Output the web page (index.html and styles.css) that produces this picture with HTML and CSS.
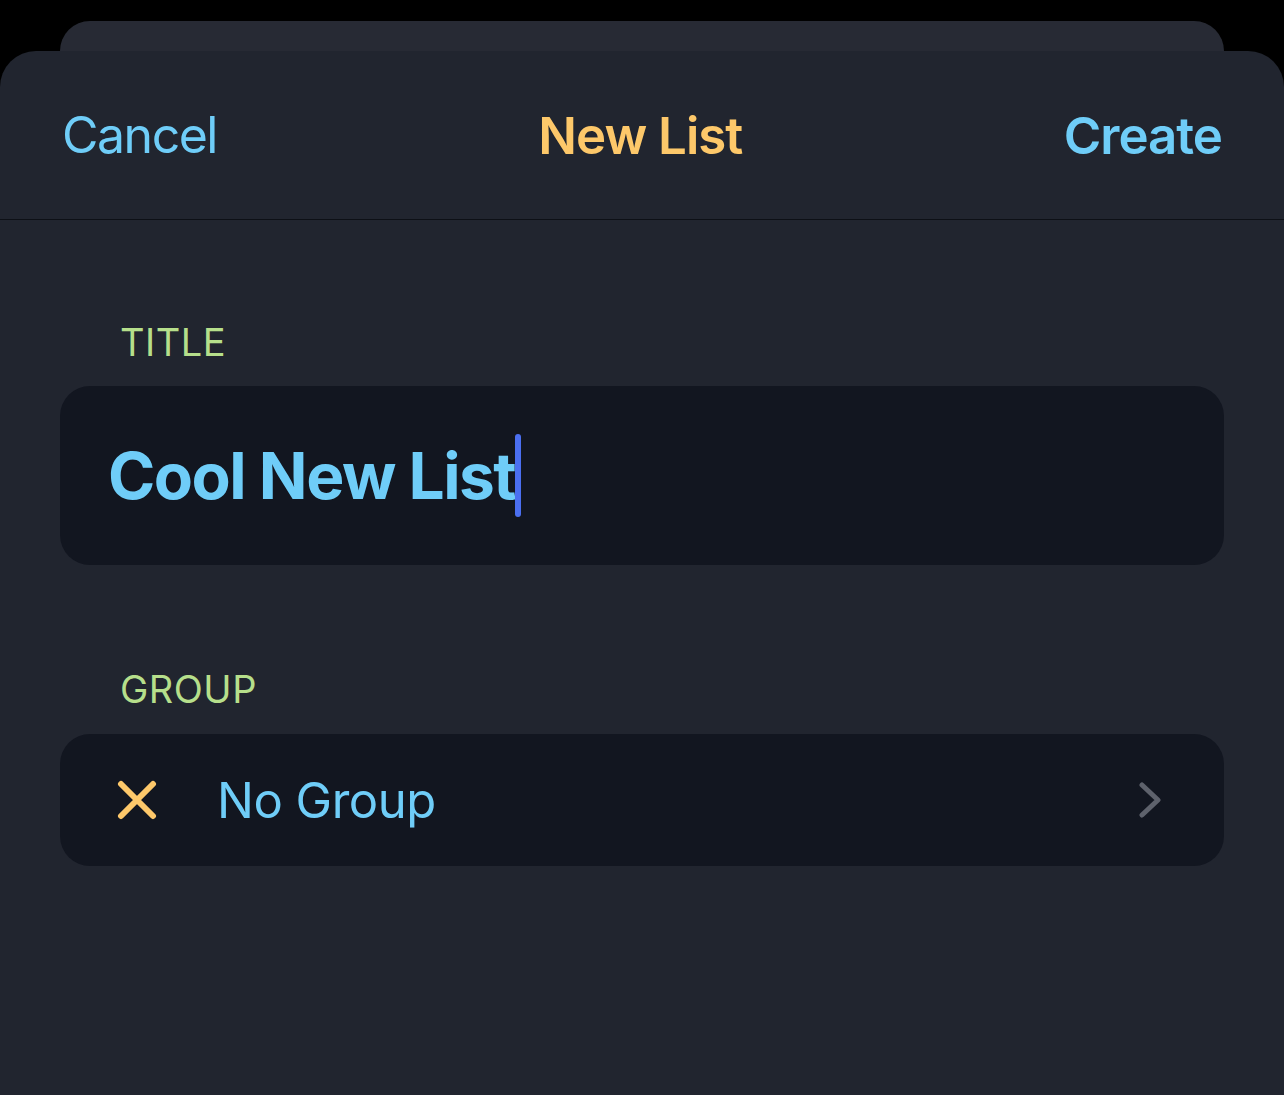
FILE: index.html
```html
<!DOCTYPE html>
<html lang="en">
<head>
<meta charset="utf-8">
<title>New List</title>
<link rel="stylesheet" href="styles.css">
</head>
<body>
<div class="screen">
  <div class="back-card"></div>
  <div class="sheet">
    <header class="nav">
      <span class="nav-btn nav-btn-cancel">Cancel</span>
      <span class="nav-title">New List</span>
      <span class="nav-btn nav-btn-strong">Create</span>
    </header>
    <main class="content">
      <div class="label label-title">TITLE</div>
      <div class="field">
        <span class="field-text">Cool New List</span><span class="cursor"></span>
      </div>
      <div class="label label-group">GROUP</div>
      <div class="row">
        <svg class="row-icon" viewBox="0 0 40 40" width="40" height="40" aria-hidden="true">
          <path d="M4 4 L36 36 M36 4 L4 36" stroke="#fdc86a" stroke-width="6" stroke-linecap="round" fill="none"/>
        </svg>
        <span class="row-text">No Group</span>
        <svg class="chevron" viewBox="0 0 22 36" width="22" height="36" aria-hidden="true">
          <path d="M3 3 L19 18 L3 33" stroke="#5e626c" stroke-width="5" stroke-linecap="round" stroke-linejoin="round" fill="none"/>
        </svg>
      </div>
    </main>
  </div>
</div>
</body>
</html>
```

FILE: styles.css
```css
* { box-sizing: border-box; }

html, body {
  margin: 0;
  padding: 0;
  background: #000;
  height: 100%;
}

body {
  font-family: Inter, "Noto Sans", "Liberation Sans", sans-serif;
  overflow: hidden;
}

.screen {
  padding-top: 21px;
  display: flex;
  flex-direction: column;
  min-height: 1095px;
}

.back-card {
  height: 30px;
  margin: 0 60px;
  background: #272a34;
  border-radius: 30px 30px 0 0;
}

.sheet {
  flex: 1;
  background: #21252f;
  border-radius: 36px 36px 0 0;
  display: flex;
  flex-direction: column;
}

.nav {
  height: 169px;
  display: flex;
  align-items: center;
  justify-content: space-between;
  padding: 0 62px 0 62px;
  border-bottom: 1px solid #0d1016;
}

.nav-btn {
  color: #6fcdf8;
  font-size: 51px;
  font-weight: 400;
  letter-spacing: -1px;
}

.nav-btn-cancel {
  font-size: 50px;
  letter-spacing: -1.5px;
}

.nav-btn-strong {
  font-weight: 600;
}

.nav-title {
  color: #fdc86a;
  font-size: 51px;
  font-weight: 600;
  letter-spacing: -1px;
}

.content {
  padding: 0 60px;
  display: flex;
  flex-direction: column;
}

.label {
  color: #b6df8b;
  font-size: 38px;
  line-height: 38px;
  padding-left: 60px;
  letter-spacing: 0.5px;
}

.label-title {
  margin-top: 103px;
  margin-bottom: 25px;
}

.label-group {
  margin-top: 105px;
  margin-bottom: 26px;
}

.field {
  height: 179px;
  background: #121620;
  border-radius: 30px;
  display: flex;
  align-items: center;
  padding-left: 48px;
}

.field-text {
  color: #6fcdf8;
  font-size: 64px;
  font-weight: 700;
  letter-spacing: -1.5px;
}

.cursor {
  width: 6px;
  height: 83px;
  border-radius: 3px;
  background: #4b6ff0;
  margin-left: 0;
}

.row {
  height: 132px;
  background: #121620;
  border-radius: 30px;
  display: flex;
  align-items: center;
  padding: 0 63px 0 57px;
}

.row-icon {
  flex: none;
}

.row-text {
  flex: 1;
  color: #6fcdf8;
  font-size: 49px;
  font-weight: 400;
  margin-left: 60px;
  letter-spacing: -0.5px;
}

.chevron {
  flex: none;
}
```
